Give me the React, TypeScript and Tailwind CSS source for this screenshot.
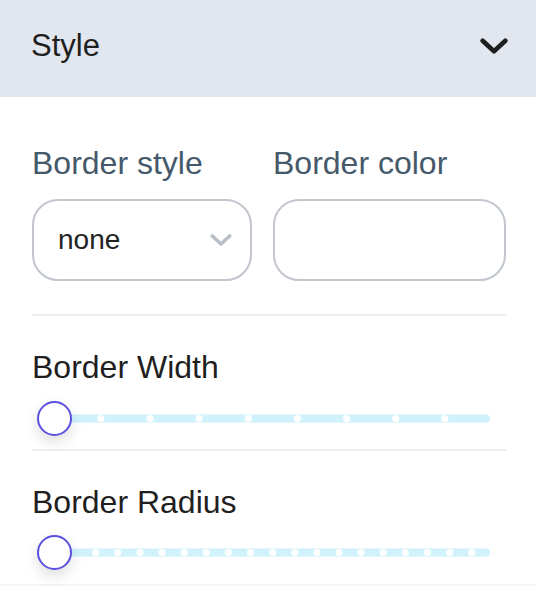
import React from 'react';

const font = { fontFamily: '"Liberation Sans", Arial, sans-serif' };

const ChevronDown = ({ className, color, width }: { className: string; color: string; width: number }) => (
  <svg viewBox="0 0 32 18" className={className} fill="none">
    <polyline points="3,3 16,15 29,3" stroke={color} strokeWidth={width} strokeLinecap="round" strokeLinejoin="round" />
  </svg>
);

const Slider = ({ first, step, count }: { first: number; step: number; count: number }) => {
  const dots = Array.from({ length: count }, (_, i) => first + i * step - 32);
  return (
    <div className="relative h-[35px]">
      <svg className="absolute inset-0 h-[35px] w-full" viewBox="0 0 474 35">
        <rect x="6" y="13.5" width="452" height="8" rx="4" fill="#cff2fc" />
        {dots.map((x) => (
          <circle key={x} cx={x} cy="17.5" r="3.6" fill="#ffffff" />
        ))}
      </svg>
      <div className="absolute left-[5px] top-0 h-[35px] w-[35px] rounded-full border-2 border-[#5b50e0] bg-white shadow-[0_6px_14px_rgba(0,0,0,0.13)]" />
    </div>
  );
};

export default function App() {
  return (
    <div className="w-[536px] bg-white" style={font}>
      <div className="flex h-[97px] items-center justify-between bg-[#e2e6ee] pb-[6px] pl-[31px] pr-[28px]">
        <span className="text-[31px] leading-none text-[#1f1f1f]">Style</span>
        <ChevronDown className="h-[16px] w-[28px]" color="#1f1f1f" width={5.2} />
      </div>

      <div className="pl-[32px] pr-[30px]">
        <div className="grid grid-cols-[220px_1fr] gap-x-[21px] border-b-2 border-[#efefef] pb-[33px] pt-[50px]">
          <div className="flex flex-col gap-[20px]">
            <span className="text-[32px] leading-none text-[#45596a]">Border style</span>
            <div className="flex h-[82px] items-center justify-between rounded-[26px] border-2 border-[#c1c6cf] pl-[24px] pr-[17px]">
              <span className="text-[28px] text-[#222]">none</span>
              <ChevronDown className="h-[12px] w-[24px]" color="#b9bfc8" width={5.5} />
            </div>
          </div>
          <div className="flex flex-col gap-[20px]">
            <span className="text-[32px] leading-none text-[#45596a]">Border color</span>
            <div className="h-[82px] rounded-[26px] border-2 border-[#c1c6cf]" />
          </div>
        </div>

        <div className="flex flex-col gap-[18px] border-b-2 border-[#efefef] pb-[13px] pt-[35px]">
          <span className="text-[32px] leading-none text-[#1f1f1f]">Border Width</span>
          <Slider first={100.9} step={49.13} count={8} />
        </div>

        <div className="flex flex-col gap-[17px] pb-[14px] pt-[35px]">
          <span className="text-[32px] leading-none text-[#1f1f1f]">Border Radius</span>
          <Slider first={95.7} step={22.12} count={18} />
        </div>
      </div>
      <div className="h-[2px] bg-[#f5f5f6]" />
    </div>
  );
}
